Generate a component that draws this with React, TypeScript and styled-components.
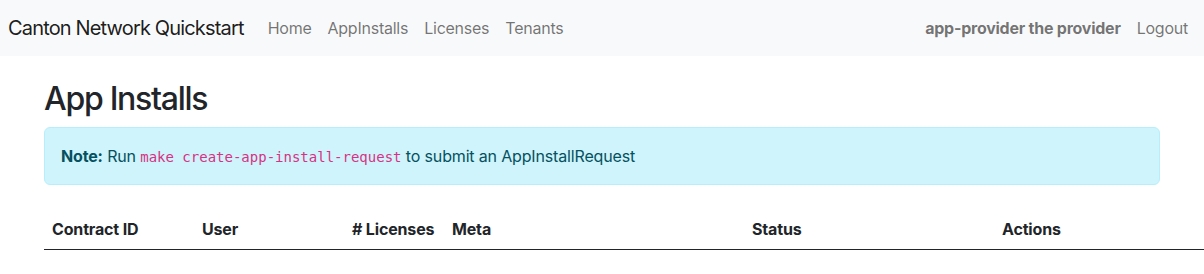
import styled, { createGlobalStyle } from "styled-components";

const GlobalStyle = createGlobalStyle`
  html, body {
    margin: 0;
    overflow-x: hidden;
  }
  body {
    font-family: Inter, "Noto Sans", "Liberation Sans", sans-serif;
    font-size: 16px;
    line-height: 1.5;
    color: #212529;
    background: #fff;
  }
`;

const Navbar = styled.nav`
  background-color: #f8f9fa;
  padding: 8px 8px;
  display: flex;
  align-items: center;
  height: 56px;
  box-sizing: border-box;
`;

const Brand = styled.a`
  font-size: 20px;
  line-height: 30px;
  padding: 5px 0;
  margin-right: 16px;
  letter-spacing: -0.042em;
  color: rgba(0, 0, 0, 0.9);
  text-decoration: none;
  white-space: nowrap;
`;

const NavList = styled.div`
  display: flex;
  align-items: center;
`;

const NavLink = styled.a<{ $bold?: boolean }>`
  padding: 8px;
  color: rgba(0, 0, 0, 0.55);
  font-weight: ${(p) => (p.$bold ? 700 : 400)};
  letter-spacing: -0.015em;
  text-decoration: none;
  white-space: nowrap;
`;

const Spacer = styled.div`
  flex: 1;
`;

const Container = styled.main`
  width: 1140px;
  margin: 24px auto 0;
  padding: 0 12px;
  box-sizing: border-box;
`;

const Title = styled.h2`
  font-size: 32px;
  font-weight: 500;
  line-height: 1.2;
  letter-spacing: -0.04em;
  margin: 0 0 9px;
`;

const Alert = styled.div`
  background-color: #cff4fc;
  border: 1px solid #b6effb;
  color: #055160;
  border-radius: 6px;
  padding: 16px;
  margin-bottom: 24px;
  letter-spacing: -0.01em;
`;

const Code = styled.code`
  font-family: "DejaVu Sans Mono", "Liberation Mono", monospace;
  font-size: 14px;
  letter-spacing: 0;
  color: #d63384;
`;

const Table = styled.table`
  width: 1160px;
  border-collapse: collapse;
  table-layout: fixed;
`;

const Th = styled.th<{ $w: number }>`
  width: ${(p) => p.$w}px;
  box-sizing: border-box;
  text-align: left;
  padding: 8px;
  font-weight: 700;
  line-height: 24px;
  letter-spacing: -0.01em;
  border-bottom: 1px solid #212529;
  white-space: nowrap;
`;

const columns: [string, number][] = [
  ["Contract ID", 150],
  ["User", 150],
  ["# Licenses", 100],
  ["Meta", 300],
  ["Status", 250],
  ["Actions", 210],
];

export default function App() {
  return (
    <>
      <GlobalStyle />
      <Navbar>
        <Brand href="#">Canton Network Quickstart</Brand>
        <NavList>
          <NavLink href="#">Home</NavLink>
          <NavLink href="#">AppInstalls</NavLink>
          <NavLink href="#">Licenses</NavLink>
          <NavLink href="#">Tenants</NavLink>
        </NavList>
        <Spacer />
        <NavList>
          <NavLink $bold>app-provider the provider</NavLink>
          <NavLink href="#">Logout</NavLink>
        </NavList>
      </Navbar>
      <Container>
        <Title>App Installs</Title>
        <Alert>
          <strong>Note:</strong> Run <Code>make create-app-install-request</Code> to submit an
          AppInstallRequest
        </Alert>
        <Table>
          <thead>
            <tr>
              {columns.map(([label, w]) => (
                <Th key={label} $w={w}>
                  {label}
                </Th>
              ))}
            </tr>
          </thead>
        </Table>
      </Container>
    </>
  );
}
